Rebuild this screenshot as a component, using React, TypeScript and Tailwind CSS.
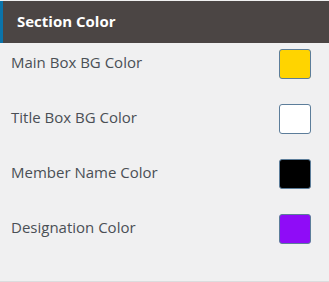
const rows = [
	{ label: "Main Box BG Color", color: "#ffd400" },
	{ label: "Title Box BG Color", color: "#ffffff" },
	{ label: "Member Name Color", color: "#000000" },
	{ label: "Designation Color", color: "#8f0cf7" },
];

export default function App() {
	return (
		<div className="w-[329px] h-[282px] bg-[#f0f0f1] flex flex-col font-['Open_Sans','Noto_Sans',sans-serif] border-b border-[#dcdcde]">
			<div className="mt-px h-[42px] bg-[#4b4544] border-l-[3px] border-[#0a73aa] flex items-center pl-[14px]">
				<span className="text-white font-bold text-[15px] pb-[2px]">Section Color</span>
			</div>
			<div className="flex flex-col gap-[25px] pt-[6px]">
				{rows.map((row, index) => (
					<div key={index} className="h-[30px] flex items-center justify-between pl-[11px] pr-[18px]">
						<span className="text-[15px] text-[#4a4f55] pb-[4px]">{row.label}</span>
						<span
							className="w-[32px] h-[30px] rounded-[3px] border border-[#5c7d9a]"
							style={{ backgroundColor: row.color }}
						/>
					</div>
				))}
			</div>
		</div>
	);
}
